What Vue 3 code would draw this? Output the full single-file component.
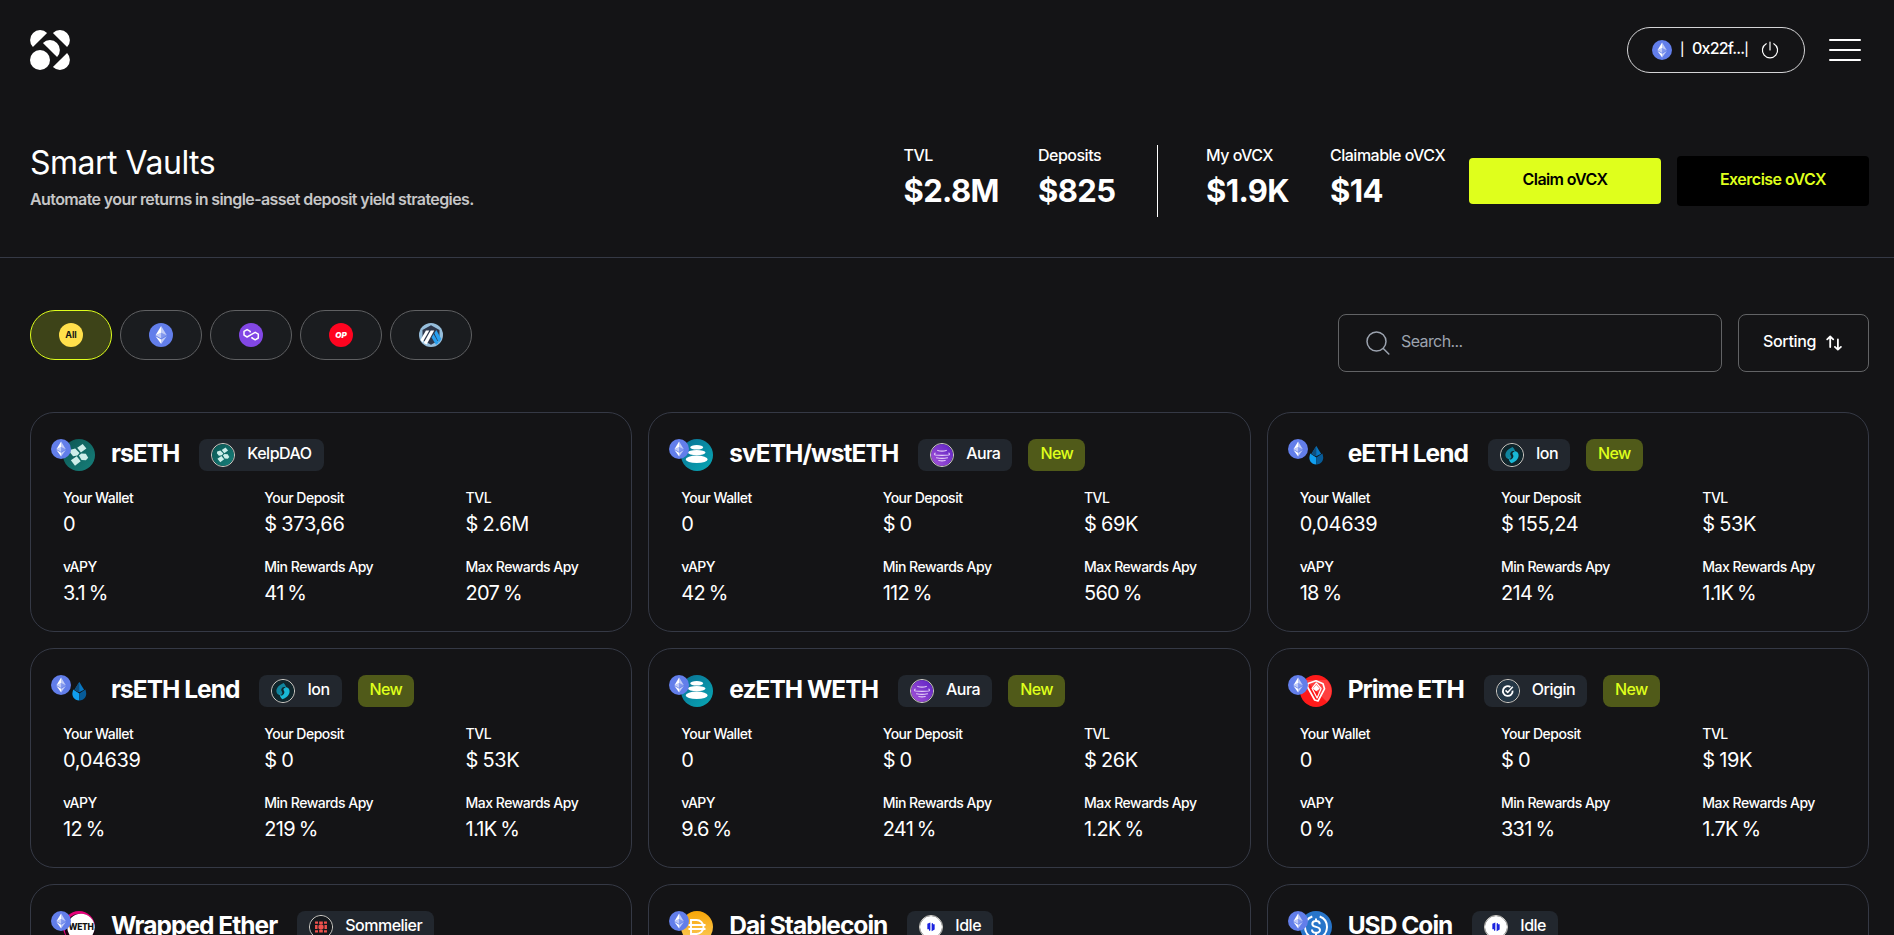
<script setup>
const chains = [
  { id: 'all', text: 'All', active: true },
  { id: 'eth' },
  { id: 'polygon' },
  { id: 'optimism', text: 'OP' },
  { id: 'arbitrum' },
]

const labels = ['Your Wallet', 'Your Deposit', 'TVL', 'vAPY', 'Min Rewards Apy', 'Max Rewards Apy']

const vaults = [
  { name: 'rsETH', coin: 'kelp', tag: 'KelpDAO', tagIcon: 'kelp', values: ['0', '$ 373,66', '$ 2.6M', '3.1 %', '41 %', '207 %'] },
  { name: 'svETH/wstETH', coin: 'balancer', tag: 'Aura', tagIcon: 'aura', isNew: true, values: ['0', '$ 0', '$ 69K', '42 %', '112 %', '560 %'] },
  { name: 'eETH Lend', coin: 'drop', tag: 'Ion', tagIcon: 'ion', isNew: true, values: ['0,04639', '$ 155,24', '$ 53K', '18 %', '214 %', '1.1K %'] },
  { name: 'rsETH Lend', coin: 'drop', tag: 'Ion', tagIcon: 'ion', isNew: true, values: ['0,04639', '$ 0', '$ 53K', '12 %', '219 %', '1.1K %'] },
  { name: 'ezETH WETH', coin: 'balancer', tag: 'Aura', tagIcon: 'aura', isNew: true, values: ['0', '$ 0', '$ 26K', '9.6 %', '241 %', '1.2K %'] },
  { name: 'Prime ETH', coin: 'prime', tag: 'Origin', tagIcon: 'origin', isNew: true, values: ['0', '$ 0', '$ 19K', '0 %', '331 %', '1.7K %'] },
  { name: 'Wrapped Ether', coin: 'weth', coinText: 'WETH', tag: 'Sommelier', tagIcon: 'sommelier' },
  { name: 'Dai Stablecoin', coin: 'dai', tag: 'Idle', tagIcon: 'idle' },
  { name: 'USD Coin', coin: 'usdc', tag: 'Idle', tagIcon: 'idle' },
]
</script>

<template>
  <div class="page">
    <svg class="sprite" aria-hidden="true">
      <defs>
        <linearGradient id="g-kelp" x1="0" y1="0" x2="1" y2="1"><stop offset="0" stop-color="#0b5552" /><stop offset="1" stop-color="#17807b" /></linearGradient>
        <linearGradient id="g-bal" x1="0" y1="0" x2="1" y2="1"><stop offset="0" stop-color="#0a6f94" /><stop offset="1" stop-color="#08a8b4" /></linearGradient>
        <linearGradient id="g-aura" x1="0" y1="1" x2="1" y2="0"><stop offset="0" stop-color="#a855d8" /><stop offset="1" stop-color="#5b21c4" /></linearGradient>
        <linearGradient id="g-dai" x1="0" y1="0" x2="0" y2="1"><stop offset="0" stop-color="#f9a606" /><stop offset="1" stop-color="#fbcc5f" /></linearGradient>
      </defs>
      <symbol id="i-all" viewBox="0 0 24 24">
        <circle cx="12" cy="12" r="12" fill="#ffe04b" />
      </symbol>
      <symbol id="i-eth" viewBox="0 0 32 32">
        <circle cx="16" cy="16" r="16" fill="#627eea" />
        <path d="M16.2 4v8.900l7.500 3.300z" fill="#fff" fill-opacity=".6" />
        <path d="M16.2 4L8.700 16.200l7.500-3.300z" fill="#fff" />
        <path d="M16.2 22v6l7.500-10.400z" fill="#fff" fill-opacity=".6" />
        <path d="M16.2 28v-6l-7.500-4.400z" fill="#fff" />
        <path d="M16.2 20.600l7.500-4.400-7.500-3.300z" fill="#fff" fill-opacity=".2" />
        <path d="M8.700 16.200l7.500 4.400v-7.700z" fill="#fff" fill-opacity=".6" />
      </symbol>
      <symbol id="i-polygon" viewBox="0 0 24 24">
        <circle cx="12" cy="12" r="12" fill="#8247e5" />
        <path d="M11.200 9.400V8.400L8.100 6.600 5 8.400v3.700l3.100 1.900 3.200-1.900 1.700-1 3.200-1.800 3.100 1.800v3.900l-3.100 1.800-3.200-1.800v-1.100" fill="none" stroke="#fff" stroke-width="1.500" stroke-linejoin="round" />
      </symbol>
      <symbol id="i-optimism" viewBox="0 0 24 24">
        <circle cx="12" cy="12" r="12" fill="#ff0420" />
      </symbol>
      <symbol id="i-arbitrum" viewBox="0 0 24 24">
        <circle cx="12" cy="12" r="12" fill="#96bedc" />
        <path d="M12 2.200l8.500 4.900v9.800L12 21.800l-8.500-4.900V7.100z" fill="#2d374b" />
        <path d="M15.300 10.200l2-3.200 5 9-2.400 3.800z" fill="#28a0f0" />
        <path d="M12.600 14.600l2-3.700 5 9-2.600 1.800z" fill="#28a0f0" />
        <path d="M6.900 7.500h3.400L3.600 19.300 1.500 17z" fill="#fff" />
        <path d="M11.700 7.500h3.500L7.600 21.500l-3-1.500z" fill="#fff" />
      </symbol>
      <symbol id="i-kelp" viewBox="0 0 32 32">
        <circle cx="16" cy="16" r="16" fill="url(#g-kelp)" />
        <g fill="#cdeeea">
          <path d="M14.200 8.700l5.500-3.700 3.700 4.600-5.500 3.900z" />
          <path d="M7.600 10.800l4.600-1.200 4.300 4.300-2.100 2.500-4.300.8-3-3.600z" />
          <path d="M15.900 16.500l2.400-2 4.500.3 2.400 4-2.300 2.500-4.400-.3z" />
          <path d="M7.900 21.300l5.800-4 4 4.900-5.700 4.500z" />
        </g>
      </symbol>
      <symbol id="i-balancer" viewBox="0 0 32 32">
        <circle cx="16" cy="16" r="16" fill="url(#g-bal)" />
        <g fill="#fff"><ellipse cx="15.700" cy="8.300" rx="6.500" ry="2.300" /><ellipse cx="15.700" cy="13.600" rx="8.800" ry="2.700" /><ellipse cx="15.700" cy="20.300" rx="11" ry="3.700" /></g>
      </symbol>
      <symbol id="i-drop" viewBox="0 0 32 32">
        <path d="M16.300 7l4.800 7.800-4.800 2.500-4.800-2.500z" fill="#0877c2" />
        <path d="M16.300 7v10.300l-4.800-2.500z" fill="#0f4f7f" />
        <path d="M10.200 14.600l6.100 3.800v7.200c-5 0-8-4.600-6.600-9z" fill="#109ff0" />
        <path d="M22.400 14.600l-6.100 3.800v7.200c5 0 8-4.600 6.600-9z" fill="#075b98" />
      </symbol>
      <symbol id="i-aura" viewBox="0 0 24 24">
        <circle cx="12" cy="12" r="12" fill="url(#g-aura)" />
        <g fill="none" stroke="#e3cdf8" stroke-width="1.200" stroke-linecap="round">
          <path d="M7.300 7q4.700 1.600 9.400 0M4.500 10q-1.500 1.500.5 2 7 .9 14 0 2-.5.500-2M6 15q6 1.300 12 0M8.500 18q3.500.8 7 0" />
        </g>
      </symbol>
      <symbol id="i-ion" viewBox="0 0 24 24">
        <circle cx="12" cy="12" r="12" fill="#10262c" />
        <path d="M12.700 3.200c-6 2.500-8.700 6.200-7.700 10.200 1 3.200 4.700 3.800 6.300 1.500.9-1.700-1-2.400-.8-4.400.3-2.700 3.800-2.600 5.200-.4.200-2.700-1-5-3-6.900z" fill="#10859e" />
        <path d="M11.300 21c6-2.300 8.700-6.200 7.700-10.200-1-3.200-4.700-3.800-6.300-1.500-.9 1.700 1 2.400.8 4.400-.3 2.700-3.800 2.600-5.200.4-.2 2.700 1 5 3 6.900z" fill="#19b8d6" />
        <path d="M14.500 8.500c-2-.8-4 .5-3.700 2.600.3 1.500 1.700 2.100 1.500 3.600-.3 1.500-1.700 1.900-3.100 1.500" fill="none" stroke="#10262c" stroke-width="1.100" />
      </symbol>
      <symbol id="i-prime" viewBox="0 0 32 32">
        <circle cx="16" cy="16" r="16" fill="#ff1a1a" />
        <path d="M5 5l22 22a16 16 0 0 0 0-22z" fill="#fff" fill-opacity=".16" />
        <g fill="none" stroke="#fff" stroke-linejoin="round">
          <path d="M8 8.500l8-2.700 7 3 1.500 5-6.500 12.200-3.300-1L7.500 12z" stroke-width="1.700" />
          <path d="M12 13.300l4.300-5.300 4.800 5.500-4 9.500z" stroke-width="1.200" />
        </g>
        <path d="M16.300 9.700l3.500 4-3.500 2.500-3.500-2.500z" fill="#fff" />
      </symbol>
      <symbol id="i-origin" viewBox="0 0 24 24">
        <circle cx="12" cy="12" r="12" fill="#243746" />
        <path d="M17 11.500a5.300 5.300 0 1 1-2.300-3.800" fill="none" stroke="#fff" stroke-width="2" />
        <path d="M9.300 11.300l2.400 2.300 5.500-6.200" fill="none" stroke="#fff" stroke-width="1.700" />
      </symbol>
      <symbol id="i-weth" viewBox="0 0 32 32">
        <circle cx="16" cy="16" r="16" fill="#e6007a" />
        <circle cx="17" cy="18" r="15.200" fill="#1a0010" />
        <circle cx="18" cy="16.500" r="13.700" fill="#fff" />
      </symbol>
      <symbol id="i-sommelier" viewBox="0 0 24 24">
        <circle cx="12" cy="12" r="12" fill="#15181c" />
        <g fill="#f0524d">
          <circle cx="12" cy="12" r="2.900" />
          <path d="M5.500 6h3.200v2.400H5.500zM10 6h4v2.600h-4zM15.300 6h3.200v2.400h-3.200zM5.500 9.700h2.700v4.600H5.500zM15.800 9.700h2.700v4.600h-2.700zM5.500 15.600h3.200V18H5.500zM10 15.400h4V18h-4zM15.300 15.600h3.200V18h-3.200z" />
        </g>
      </symbol>
      <symbol id="i-dai" viewBox="0 0 32 32">
        <circle cx="16" cy="16" r="16" fill="url(#g-dai)" />
        <path d="M10 9h5.500a7 7 0 0 1 0 14H10zM7.500 14h17M7.500 18h17" fill="none" stroke="#fff" stroke-width="1.900" />
      </symbol>
      <symbol id="i-usdc" viewBox="0 0 32 32">
        <circle cx="16" cy="16" r="16" fill="#2775ca" />
        <g fill="none" stroke="#fff" stroke-width="2">
          <path d="M12.300 5.500a11.200 11.200 0 0 0 0 21M19.700 5.500a11.200 11.200 0 0 1 0 21" />
          <path d="M19.700 13.200c0-4.300-7.400-4-7.400-.3 0 4.200 7.700 1.700 7.700 6 0 4-8 4-8-.5M16 7.500v3M16 21.500v3" />
        </g>
      </symbol>
      <symbol id="i-idle" viewBox="0 0 24 24">
        <circle cx="12" cy="12" r="12" fill="#fff" />
        <path d="M8 8.500l3.300-1.500v8.500l-1.500.8V14.500H8zM12.700 8.300l1.500-.8v1.600H16v5.700l-3.300 1.700z" fill="#1a22e0" />
      </symbol>
    </svg>

    <header class="topbar">
      <svg class="logo" viewBox="0 0 40 40" fill="#fff">
        <path d="M2.930 17.070A10 10 0 0 1 17.070 2.930z" />
        <path d="M22.930 2.930A10 10 0 0 1 37.070 17.070z" />
        <path d="M12.930 12.930A10 10 0 0 1 27.070 27.070z" />
        <path d="M37.070 22.930A10 10 0 0 1 22.930 37.070z" />
        <circle cx="10" cy="30" r="10" />
      </svg>
      <div class="account">
        <div class="wallet">
          <svg class="wallet-icon"><use href="#i-eth" /></svg>
          <span class="wallet-bar">|</span>
          <span class="wallet-text">0x22f...<i>|</i></span>
          <svg class="power" viewBox="0 0 18 18" fill="none" stroke="#fff" stroke-width="1.200" stroke-linecap="round">
            <path d="M5.200 2.700a7.600 7.600 0 1 0 7.600 0M9 1v8" />
          </svg>
        </div>
        <div class="burger"><i></i><i></i><i></i></div>
      </div>
    </header>

    <section class="hero">
      <div>
        <h1>Smart Vaults</h1>
        <p>Automate your returns in single-asset deposit yield strategies.</p>
      </div>
      <div class="summary">
        <div class="stats">
          <div><span>TVL</span><b>$2.8M</b></div>
          <div><span>Deposits</span><b>$825</b></div>
          <div class="rule"></div>
          <div><span>My oVCX</span><b>$1.9K</b></div>
          <div><span>Claimable oVCX</span><b>$14</b></div>
        </div>
        <div class="actions">
          <button class="claim">Claim oVCX</button>
          <button class="exercise">Exercise oVCX</button>
        </div>
      </div>
    </section>

    <section class="filters">
      <div class="chips">
        <button v-for="c in chains" :key="c.id" class="chip" :class="{ active: c.active }">
          <svg><use :href="'#i-' + c.id" /></svg>
          <span v-if="c.text" class="mark" :class="c.id">{{ c.text }}</span>
        </button>
      </div>
      <div class="tools">
        <div class="search">
          <svg viewBox="0 0 24 24" fill="none" stroke="#9ca3af" stroke-width="1.500" stroke-linecap="round">
            <circle cx="10.500" cy="10.500" r="9.500" /><path d="M17.300 17.500l5.500 5.500" />
          </svg>
          <span>Search...</span>
        </div>
        <div class="sort">
          <span>Sorting</span>
          <svg viewBox="0 0 16 16" fill="none" stroke="#fff" stroke-width="1.800" stroke-linecap="round" stroke-linejoin="round">
            <path d="M4.200 12V1.700M1.200 4.300l3-2.800 3 2.800M11.900 4.500v10M8.900 11.900l3 2.800 3-2.800" />
          </svg>
        </div>
      </div>
    </section>

    <main class="grid">
      <article v-for="v in vaults" :key="v.name" class="card">
        <div class="head">
          <div class="coins">
            <svg class="coin"><use :href="'#i-' + v.coin" /></svg>
            <span v-if="v.coinText" class="mark weth">{{ v.coinText }}</span>
            <svg class="network"><use href="#i-eth" /></svg>
          </div>
          <h2>{{ v.name }}</h2>
          <div class="tag">
            <svg><use :href="'#i-' + v.tagIcon" /></svg>
            <span>{{ v.tag }}</span>
          </div>
          <div v-if="v.isNew" class="new"><span>New</span></div>
        </div>
        <dl v-if="v.values">
          <div v-for="(l, i) in labels" :key="l">
            <dt>{{ l }}</dt>
            <dd :class="{ percent: i > 2 }">{{ v.values[i] }}</dd>
          </div>
        </dl>
      </article>
    </main>
  </div>
</template>

<style>
html,
body {
  background: #141416;
  overflow: hidden;
}
</style>

<style scoped>
.page {
  height: 935px;
  overflow: hidden;
  background: #141416;
  color: #fff;
  font-family: Inter, 'Liberation Sans', sans-serif;
  font-size: 16px;
  line-height: 24px;
  letter-spacing: -0.6px;
}
.page * {
  box-sizing: border-box;
}
svg {
  display: block;
  flex: none;
}
.sprite {
  position: absolute;
  width: 0;
  height: 0;
}
.topbar {
  height: 100px;
  padding: 0 33px 0 30px;
  display: flex;
  align-items: center;
  justify-content: space-between;
}
.logo {
  width: 40px;
  height: 40px;
}
.account {
  display: flex;
  align-items: center;
  gap: 24px;
}
.wallet {
  width: 178px;
  height: 46px;
  border: 1px solid #d4d4d6;
  border-radius: 23px;
  padding-left: 24px;
  display: flex;
  align-items: center;
  font-weight: 500;
}
.wallet-icon {
  width: 20px;
  height: 20px;
}
.wallet-bar {
  width: 12px;
  margin-left: 8px;
  padding-bottom: 3px;
  font-size: 13px;
}
.wallet-text {
  width: 69px;
  padding-bottom: 3px;
  letter-spacing: -0.8px;
}
.wallet-text i {
  font-size: 13px;
  font-style: normal;
}
.power {
  width: 18px;
  height: 18px;
}
.burger {
  width: 32px;
  display: flex;
  flex-direction: column;
  gap: 8px;
}
.burger i {
  height: 2px;
  border-radius: 1px;
  background: #fff;
}
.hero {
  height: 158px;
  padding: 43px 25px 0 30px;
  border-bottom: 1px solid #353945;
  display: flex;
  justify-content: space-between;
}
h1 {
  margin: 0;
  font-size: 32px;
  line-height: 40px;
  font-weight: 400;
  letter-spacing: -0.5px;
}
.hero p {
  margin: 4px 0 0;
  color: #c6c6c7;
  font-weight: 600;
  letter-spacing: -0.6px;
}
.summary {
  display: flex;
}
.stats {
  display: grid;
  grid-template-columns: 134.500px 119px 49px 124px 139px;
}
.stats span,
.stats b {
  display: block;
  white-space: nowrap;
}
.stats span {
  font-weight: 500;
  letter-spacing: -0.5px;
}
.stats b {
  margin-top: 4px;
  font-size: 31px;
  line-height: 40px;
  font-weight: 700;
}
.rule {
  width: 1px;
  height: 72px;
  margin-top: 2px;
  background: #fff;
}
.actions {
  display: flex;
  align-items: center;
  gap: 16px;
  height: 50px;
  margin-top: 13px;
}
button {
  margin: 0;
  border: 0;
  font: inherit;
  letter-spacing: inherit;
  color: inherit;
}
.claim,
.exercise {
  width: 192px;
  border-radius: 4px;
  padding: 0 0 5px;
  font-weight: 600;
}
.claim {
  height: 46px;
  background: #dfff1c;
  color: #000;
}
.exercise {
  height: 50px;
  background: #000;
  color: #dfff1c;
  letter-spacing: -0.5px;
}
.filters {
  display: flex;
  justify-content: space-between;
  align-items: flex-start;
  padding: 52px 25px 0 30px;
  height: 154px;
}
.chips {
  display: flex;
  gap: 8px;
}
.chip {
  position: relative;
  width: 82px;
  height: 50px;
  border: 1px solid #5f6062;
  border-radius: 25px;
  background: #1a1c1f;
  display: flex;
  align-items: center;
  justify-content: center;
  padding: 0;
}
.chip.active {
  border-color: #dfff1c;
  background: #3d4318;
}
.chip svg {
  width: 24px;
  height: 24px;
}
.mark {
  position: absolute;
  inset: 0;
  display: flex;
  align-items: center;
  justify-content: center;
  letter-spacing: 0;
}
.mark.all {
  color: #141416;
  font-size: 9px;
  font-weight: 700;
}
.mark.optimism {
  font-size: 8px;
  font-weight: 900;
  font-style: italic;
}
.mark.weth {
  inset: 0 -4px 0 0;
  color: #111;
  font-size: 8.500px;
  font-weight: 800;
  letter-spacing: -0.3px;
}
.tools {
  display: flex;
  gap: 16px;
  margin-top: 4px;
}
.search,
.sort {
  height: 58px;
  border: 1px solid #626365;
  border-radius: 8px;
  display: flex;
  align-items: center;
}
.search {
  width: 384px;
  padding-left: 27px;
  color: #9ca3af;
}
.search svg {
  width: 24px;
  height: 24px;
  margin-right: 11px;
}
.search span,
.sort span {
  padding-bottom: 5px;
}
.sort {
  width: 131px;
  padding-left: 24px;
  font-weight: 500;
}
.sort span {
  width: 63px;
  letter-spacing: -0.35px;
}
.sort svg {
  width: 16px;
  height: 16px;
}
.grid {
  display: grid;
  grid-template-columns: repeat(3, 1fr);
  gap: 16px;
  padding: 0 25px 0 30px;
}
.card {
  height: 220px;
  min-width: 0;
  border: 1px solid #353945;
  border-radius: 24px;
  padding: 26px 0 0 32px;
}
.head {
  height: 32px;
  display: flex;
  align-items: center;
}
.coins {
  position: relative;
  width: 32px;
  height: 32px;
  margin-right: 16px;
}
.coin {
  width: 32px;
  height: 32px;
}
.network {
  position: absolute;
  left: -12px;
  top: 0;
  width: 20px;
  height: 20px;
}
h2 {
  margin: 0 20px 0 0;
  padding-bottom: 4px;
  font-size: 24.500px;
  line-height: 28px;
  font-weight: 700;
  letter-spacing: -0.980px;
}
.tag,
.new {
  height: 32px;
  border-radius: 8px;
  padding: 0 12px;
  display: flex;
  align-items: center;
  font-weight: 500;
}
.tag {
  background: #22272e;
  letter-spacing: -0.5px;
}
.tag svg {
  width: 24px;
  height: 24px;
  margin-right: 12px;
  border: 1px solid #d6d3cc;
  border-radius: 50%;
}
.tag span,
.new span {
  padding-bottom: 5px;
}
.new {
  margin-left: 16px;
  background: #505a19;
  color: #dfff1c;
}
dl {
  margin: 17px 0 0;
  display: grid;
  grid-template-columns: repeat(3, 201.300px);
  row-gap: 19px;
}
dt {
  font-size: 14px;
  line-height: 20px;
  font-weight: 500;
  letter-spacing: -0.5px;
}
dd {
  margin: 2px 0 0;
  font-size: 20px;
  line-height: 28px;
  letter-spacing: -0.350px;
  word-spacing: -0.800px;
}
dd.percent {
  letter-spacing: -0.7px;
  word-spacing: -1.200px;
}
</style>
